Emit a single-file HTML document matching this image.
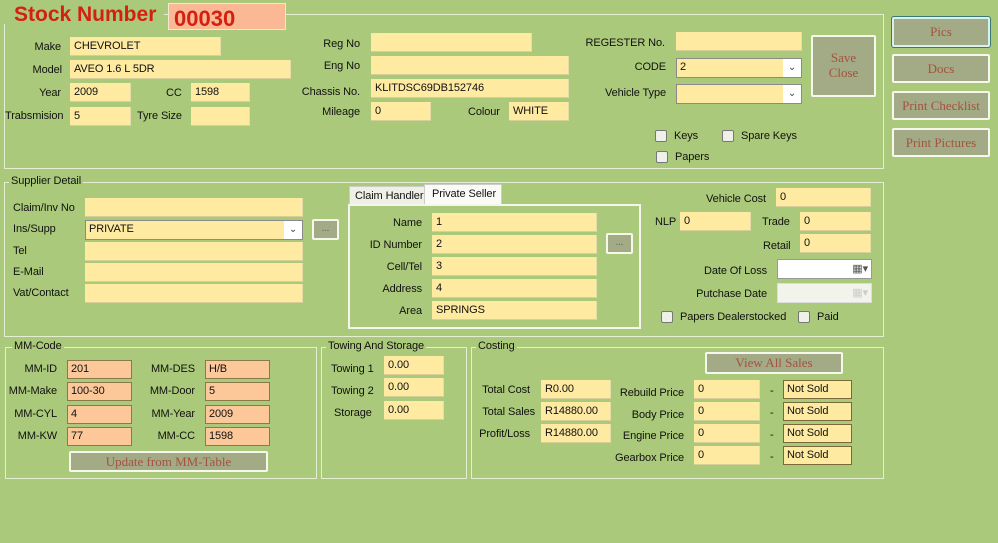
<!DOCTYPE html>
<html><head><meta charset="utf-8"><style>
*{box-sizing:border-box;margin:0;padding:0}
body{width:998px;height:543px;background:#abc97a;font-family:"Liberation Sans",Arial,sans-serif;font-size:11px;letter-spacing:-0.1px;color:#111;position:relative;overflow:hidden}
div,span{position:absolute;white-space:nowrap}
.f{background:#feeaa1;height:19px;padding:3px 0 0 4px;border-bottom:1px solid #d8cf98;border-right:1px solid #e6dca8}
.p{background:#fcc89a;height:19px;padding:2px 0 0 3px;border:1px solid #8a7a4a}
.ns{background:#feeaa1;height:19px;padding:2px 0 0 3px;border:1px solid #7a6a3a}
.r{text-align:right}
.g{border:1px solid #e4efd2}
.gl{background:#abc97a;padding:0 2px;top:-8px;left:6px}
.b{background:#a2ab85;border:2px solid #f6f8ee;border-radius:2px;color:#a5523f;font-family:"Liberation Serif",serif;font-size:13px;text-align:center;letter-spacing:0}
.cb{width:12px;height:12px;border:1px solid #777;border-radius:2px;background:#eef0ea}
.cmb{background:#feeaa1;border:1px solid #8a8a8a;height:20px;padding:2px 0 0 3px}
.arr{right:0;top:0;width:18px;height:18px;background:#fff;text-align:center;font-size:10px;color:#444;line-height:17px}
</style></head><body>
<div class="g" style="left:4px;top:14px;width:880px;height:155px"></div>
<div style="left:4px;top:6px;width:160px;height:18px;background:#abc97a"></div>
<div style="left:14px;top:3px;font-size:21px;font-weight:bold;color:#d42010;letter-spacing:0">Stock Number</div>
<div style="left:168px;top:3px;width:118px;height:27px;background:#fbb894;border:1px solid #f4e8d0;color:#d42010;font-size:22px;font-weight:bold;padding:2px 0 0 5px;letter-spacing:0">00030</div>

<div class="r" style="left:0;width:61px;top:41px">Make</div><div class="f" style="left:70px;top:37px;width:151px">CHEVROLET</div>
<div class="r" style="left:0;width:62px;top:64px">Model</div><div class="f" style="left:70px;top:60px;width:221px">AVEO 1.6 L 5DR</div>
<div class="r" style="left:0;width:61px;top:87px">Year</div><div class="f" style="left:70px;top:83px;width:61px">2009</div>
<div style="left:166px;top:87px">CC</div><div class="f" style="left:191px;top:83px;width:59px">1598</div>
<div style="left:5px;top:110px">Trabsmision</div><div class="f" style="left:70px;top:107px;width:61px">5</div>
<div style="left:137px;top:110px">Tyre Size</div><div class="f" style="left:191px;top:107px;width:59px"></div>

<div class="r" style="left:280px;width:80px;top:38px">Reg No</div><div class="f" style="left:371px;top:33px;width:161px"></div>
<div class="r" style="left:280px;width:80px;top:60px">Eng No</div><div class="f" style="left:371px;top:56px;width:198px"></div>
<div class="r" style="left:280px;width:80px;top:86px">Chassis No.</div><div class="f" style="left:371px;top:79px;width:198px">KLITDSC69DB152746</div>
<div class="r" style="left:280px;width:80px;top:106px">Mileage</div><div class="f" style="left:371px;top:102px;width:60px">0</div>
<div style="left:468px;top:106px">Colour</div><div class="f" style="left:509px;top:102px;width:60px">WHITE</div>

<div class="r" style="left:560px;width:105px;top:37px">REGESTER No.</div><div class="f" style="left:676px;top:32px;width:126px"></div>
<div class="r" style="left:560px;width:106px;top:61px">CODE</div><div class="cmb" style="left:676px;top:58px;width:126px">2<span class="arr">&#8964;</span></div>
<div class="r" style="left:560px;width:106px;top:87px">Vehicle Type</div><div class="cmb" style="left:676px;top:84px;width:126px"><span class="arr">&#8964;</span></div>
<div class="b" style="left:811px;top:35px;width:65px;height:62px;padding-top:13px;line-height:15px;white-space:normal">Save<br>Close</div>
<div class="cb" style="left:655px;top:130px"></div><div style="left:674px;top:130px">Keys</div>
<div class="cb" style="left:722px;top:130px"></div><div style="left:741px;top:130px">Spare Keys</div>
<div class="cb" style="left:656px;top:151px"></div><div style="left:675px;top:151px">Papers</div>

<div class="b" style="left:892px;top:17px;width:98px;height:30px;line-height:26px;border-color:#d8f0f0;box-shadow:0 0 0 1px #3a7a70">Pics</div>
<div class="b" style="left:892px;top:54px;width:98px;height:29px;line-height:25px">Docs</div>
<div class="b" style="left:892px;top:91px;width:98px;height:29px;line-height:25px">Print Checklist</div>
<div class="b" style="left:892px;top:128px;width:98px;height:29px;line-height:25px">Print Pictures</div>

<div class="g" style="left:4px;top:182px;width:880px;height:155px"><span class="gl" style="left:4px">Supplier Detail</span></div>
<div style="left:13px;top:202px">Claim/Inv No</div><div class="f" style="left:85px;top:198px;width:218px"></div>
<div style="left:13px;top:223px">Ins/Supp</div><div class="cmb" style="left:85px;top:220px;width:218px">PRIVATE<span class="arr">&#8964;</span></div>
<div style="left:13px;top:245px">Tel</div><div class="f" style="left:85px;top:242px;width:218px"></div>
<div style="left:13px;top:266px">E-Mail</div><div class="f" style="left:85px;top:263px;width:218px"></div>
<div style="left:13px;top:287px">Vat/Contact</div><div class="f" style="left:85px;top:284px;width:218px"></div>
<div class="b" style="left:312px;top:219px;width:27px;height:21px;font-size:10px;color:#666;line-height:15px">...</div>

<div style="left:349px;top:186px;width:76px;height:19px;background:#eef0e6;border:1px solid #ccc;padding:3px 0 0 5px">Claim Handler</div>
<div style="left:424px;top:184px;width:78px;height:21px;background:#fafaf6;border:1px solid #ccc;border-bottom:none;padding:3px 0 0 7px">Private Seller</div>
<div style="left:348px;top:204px;width:293px;height:125px;border:2px solid #f4f6ee"></div>
<div class="r" style="left:340px;width:82px;top:217px">Name</div><div class="f" style="left:432px;top:213px;width:165px">1</div>
<div class="r" style="left:340px;width:82px;top:239px">ID Number</div><div class="f" style="left:432px;top:235px;width:165px">2</div>
<div class="r" style="left:340px;width:82px;top:261px">Cell/Tel</div><div class="f" style="left:432px;top:257px;width:165px">3</div>
<div class="r" style="left:340px;width:82px;top:283px">Address</div><div class="f" style="left:432px;top:279px;width:165px">4</div>
<div class="r" style="left:340px;width:82px;top:305px">Area</div><div class="f" style="left:432px;top:301px;width:165px">SPRINGS</div>
<div class="b" style="left:606px;top:233px;width:27px;height:21px;font-size:10px;color:#666;line-height:15px">...</div>

<div class="r" style="left:660px;width:106px;top:193px">Vehicle Cost</div><div class="f" style="left:776px;top:188px;width:95px">0</div>
<div style="left:655px;top:216px">NLP</div><div class="f" style="left:680px;top:212px;width:71px">0</div>
<div style="left:762px;top:216px">Trade</div><div class="f" style="left:800px;top:212px;width:71px">0</div>
<div style="left:763px;top:240px">Retail</div><div class="f" style="left:800px;top:234px;width:71px">0</div>
<div class="r" style="left:660px;width:107px;top:265px">Date Of Loss</div><div style="left:777px;top:259px;width:95px;height:20px;background:#fff;border:1px solid #999"><span style="right:3px;top:2px;font-size:11px;color:#555">&#9638;&#9662;</span></div>
<div class="r" style="left:660px;width:107px;top:288px">Putchase Date</div><div style="left:777px;top:283px;width:95px;height:20px;background:#f2f4ec;border:1px solid #ddd"><span style="right:3px;top:2px;font-size:11px;color:#ccc">&#9638;&#9662;</span></div>
<div class="cb" style="left:661px;top:311px"></div><div style="left:680px;top:311px">Papers Dealerstocked</div>
<div class="cb" style="left:798px;top:311px"></div><div style="left:817px;top:311px">Paid</div>

<div class="g" style="left:5px;top:347px;width:312px;height:132px"><span class="gl" style="left:6px">MM-Code</span></div>
<div class="r" style="left:0;width:57px;top:363px">MM-ID</div><div class="p" style="left:67px;top:360px;width:65px">201</div>
<div class="r" style="left:0;width:57px;top:385px">MM-Make</div><div class="p" style="left:67px;top:382px;width:65px">100-30</div>
<div class="r" style="left:0;width:57px;top:408px">MM-CYL</div><div class="p" style="left:67px;top:405px;width:65px">4</div>
<div class="r" style="left:0;width:57px;top:430px">MM-KW</div><div class="p" style="left:67px;top:427px;width:65px">77</div>
<div class="r" style="left:130px;width:65px;top:363px">MM-DES</div><div class="p" style="left:205px;top:360px;width:65px">H/B</div>
<div class="r" style="left:130px;width:65px;top:385px">MM-Door</div><div class="p" style="left:205px;top:382px;width:65px">5</div>
<div class="r" style="left:130px;width:65px;top:408px">MM-Year</div><div class="p" style="left:205px;top:405px;width:65px">2009</div>
<div class="r" style="left:130px;width:65px;top:430px">MM-CC</div><div class="p" style="left:205px;top:427px;width:65px">1598</div>
<div class="b" style="left:69px;top:451px;width:199px;height:21px;line-height:17px">Update from MM-Table</div>

<div class="g" style="left:321px;top:347px;width:146px;height:132px"><span class="gl" style="left:4px">Towing And Storage</span></div>
<div style="left:331px;top:363px">Towing 1</div><div class="f" style="left:384px;top:356px;width:60px">0.00</div>
<div style="left:331px;top:385px">Towing 2</div><div class="f" style="left:384px;top:378px;width:60px">0.00</div>
<div style="left:334px;top:407px">Storage</div><div class="f" style="left:384px;top:401px;width:60px">0.00</div>

<div class="g" style="left:471px;top:347px;width:413px;height:132px"><span class="gl" style="left:4px">Costing</span></div>
<div class="b" style="left:705px;top:352px;width:138px;height:22px;line-height:18px">View All Sales</div>
<div class="r" style="left:470px;width:60px;top:384px">Total Cost</div><div class="f" style="left:541px;top:380px;width:70px">R0.00</div>
<div class="r" style="left:470px;width:65px;top:406px">Total Sales</div><div class="f" style="left:541px;top:402px;width:70px">R14880.00</div>
<div class="r" style="left:470px;width:60px;top:428px">Profit/Loss</div><div class="f" style="left:541px;top:424px;width:70px">R14880.00</div>
<div class="r" style="left:600px;width:84px;top:387px">Rebuild Price</div><div class="f" style="left:694px;top:380px;width:66px">0</div>
<div class="r" style="left:600px;width:84px;top:409px">Body Price</div><div class="f" style="left:694px;top:402px;width:66px">0</div>
<div class="r" style="left:600px;width:84px;top:430px">Engine Price</div><div class="f" style="left:694px;top:424px;width:66px">0</div>
<div class="r" style="left:600px;width:84px;top:452px">Gearbox Price</div><div class="f" style="left:694px;top:446px;width:66px">0</div>
<div style="left:770px;top:385px">-</div><div class="ns" style="left:783px;top:380px;width:69px">Not Sold</div>
<div style="left:770px;top:407px">-</div><div class="ns" style="left:783px;top:402px;width:69px">Not Sold</div>
<div style="left:770px;top:429px">-</div><div class="ns" style="left:783px;top:424px;width:69px">Not Sold</div>
<div style="left:770px;top:451px">-</div><div class="ns" style="left:783px;top:446px;width:69px">Not Sold</div>
</body></html>
